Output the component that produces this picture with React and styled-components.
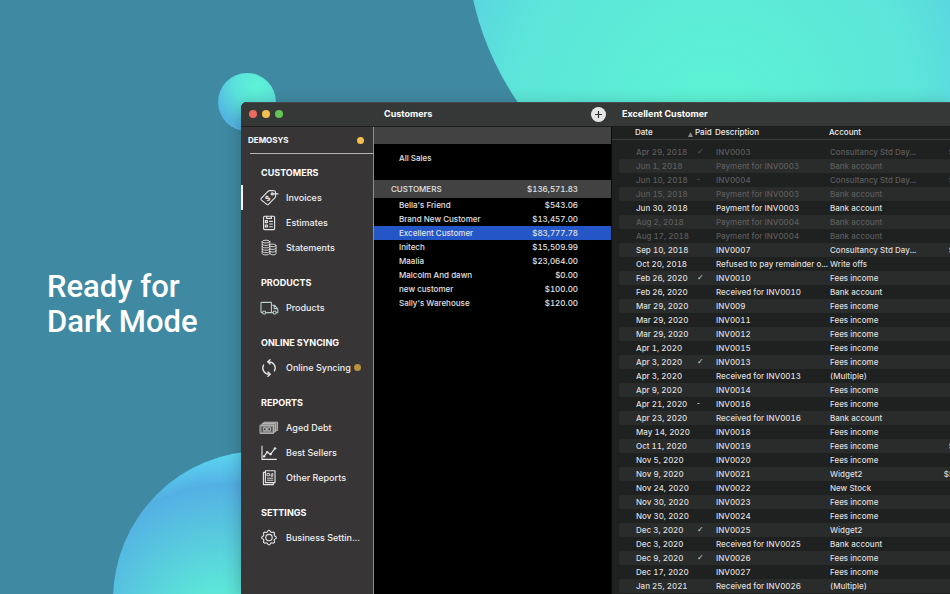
import React from "react";

import styled, { createGlobalStyle } from "styled-components";

const GlobalStyle = createGlobalStyle`
  * {
    box-sizing: border-box;
  }
  body {
    margin: 0;
    background: #3f8aa2;
    font-family: "Inter", "Liberation Sans", sans-serif;
  }
  button {
    font-family: inherit;
    border: 0;
    padding: 0;
  }
  table {
    border-collapse: separate;
    border-spacing: 0;
    table-layout: fixed;
    font-variant-numeric: tabular-nums;
  }
`;

const Page = styled.main`
  position: relative;
  display: flex;
  min-height: 100vh;
  overflow: hidden;
  background: #3f8aa2;
`;

/* decorative bubbles behind the window */
const Bubble = styled.div`
  position: absolute;
  border-radius: 50%;
`;
const TopBubble = styled(Bubble)`
  left: 466px;
  top: -361px;
  width: 592px;
  height: 592px;
  background: radial-gradient(
    circle at 42% 80%,
    #5df3d5 0,
    #5ce6d9 200px,
    #5ad7df 260px,
    #55c0e2 330px
  );
`;
const SmallBubble = styled(Bubble)`
  left: 218px;
  top: 73px;
  width: 58px;
  height: 58px;
  background: radial-gradient(
    circle at 66% 22%,
    #5df3d5 0,
    #5ae2da 22px,
    #54b4e4 45px,
    #5bd5f0 54px
  );
`;
const BottomBubble = styled(Bubble)`
  left: 113px;
  top: 451px;
  width: 298px;
  height: 298px;
  background: radial-gradient(
    circle at 38% 63%,
    #5df0d5 0,
    #5ce6d8 50px,
    #54b0e4 154px,
    #5cdcf4 190px
  );
`;

const Intro = styled.div`
  position: relative;
  flex: 0 0 241px;
  display: flex;
  align-items: center;
  padding: 14px 0 0 47px;
`;
const Headline = styled.h1`
  margin: 0;
  font-family: "Roboto", sans-serif;
  font-size: 31px;
  line-height: 35px;
  font-weight: 500;
  color: #fff;
  white-space: nowrap;
`;

const AppWindow = styled.section`
  position: relative;
  flex: 1;
  min-width: 0;
  display: flex;
  flex-direction: column;
  margin-top: 102px;
  border-radius: 6px 0 0 0;
  overflow: hidden;
  background: #000;
  box-shadow: 0 4px 18px rgba(0, 0, 0, 0.25);
`;
const TitleBar = styled.header`
  display: flex;
  height: 25px;
  padding-bottom: 1px;
  background: #363838;
  border-top: 1px solid #474a4a;
  border-bottom: 1px solid #1d1d1d;
`;
const Lights = styled.div`
  flex: 0 0 133px;
  display: flex;
  align-items: center;
  gap: 5px;
  padding-left: 8px;
`;
const Light = styled.button`
  width: 8px;
  height: 8px;
  border-radius: 50%;
  background: ${(props) => props.$color};
`;
const PaneTitle = styled.div`
  flex: ${(props) => props.$flex};
  display: flex;
  align-items: center;
  justify-content: space-between;
  padding: 0 6px 0 10px;
`;
const Title = styled.h2`
  margin: 0;
  font-size: 9px;
  line-height: 14px;
  font-weight: 700;
  color: #fff;
`;
const AddButton = styled.button`
  display: flex;
  width: 15px;
  height: 15px;
  border-radius: 50%;
  background: #e6e6e6;
`;

const Body = styled.div`
  flex: 1;
  display: flex;
`;
const Sidebar = styled.nav`
  flex: 0 0 133px;
  background: #373536;
  border-right: 1px solid #8f8f8f;
`;
const Company = styled.div`
  display: flex;
  align-items: center;
  justify-content: space-between;
  height: 26px;
  margin-left: 7px;
  padding-right: 9px;
  font-size: 8px;
  font-weight: 700;
  color: #fff;
`;
const Rule = styled.hr`
  margin: 0 0 6px 9px;
  border: 0;
  border-top: 1px solid #b4b4b4;
`;
const Dot = styled.span`
  width: 7px;
  height: 7px;
  border-radius: 50%;
  background: ${(props) => props.$color};
`;
const Group = styled.div`
  padding-bottom: 10px;
`;
const GroupTitle = styled.h3`
  margin: 0;
  padding: 0 0 0 20px;
  font-size: 9px;
  line-height: 25px;
  font-weight: 700;
  color: #fff;
`;
const NavLink = styled.a`
  display: flex;
  align-items: center;
  height: 25px;
  padding-left: 16px;
  border-left: 2px solid ${(props) => (props.$active ? "#fff" : "transparent")};
  font-size: 9px;
  font-weight: 500;
  color: #f0f0f0;
  text-decoration: none;
  white-space: nowrap;

  svg {
    flex: none;
    margin-right: 7px;
  }
  ${Dot} {
    margin-left: 3px;
  }
`;

const Customers = styled.div`
  flex: 0 0 237px;
  background: #000;
`;
const Band = styled.div`
  height: 17px;
  background: #424242;
`;
const CustomerTable = styled.table`
  width: 100%;
  font-size: 8px;
  line-height: 14px;
  font-weight: 500;
  color: #e2e2e2;

  td,
  th {
    height: 14px;
    padding: 0 0 0 25px;
    font-weight: 500;
    text-align: left;
  }
  td:last-child,
  th:last-child {
    width: 90px;
    padding: 0 33px 0 0;
    text-align: right;
  }
  thead th {
    height: 18px;
    background: #424242;
  }
  thead th:first-child {
    padding-left: 17px;
  }
`;
const AllRow = styled.tr`
  td {
    height: 36px;
    padding-bottom: 8px;
  }
`;
const CustomerRow = styled.tr`
  background: ${(props) => (props.$selected ? "#2456c8" : "transparent")};
`;

const Ledger = styled.div`
  flex: 1;
  min-width: 0;
  overflow: hidden;
  padding-left: 7px;
  background: #1f2020;
  border-left: 1px solid #0c0c0c;
`;
const LedgerTable = styled.table`
  width: 100%;
  min-width: 335px;
  font-size: 8px;
  line-height: 14px;
  font-weight: 500;

  th {
    height: 12px;
    padding: 0 0 2px;
    line-height: 10px;
    font-weight: 500;
    text-align: left;
    color: #ededed;
  }
  th:first-child {
    padding-left: 16px;
  }
  td {
    height: 14px;
    padding: 0 0 0 1px;
    white-space: nowrap;
  }
  td:first-child {
    padding-left: 17px;
    border-radius: 3px 0 0 3px;
  }
  td:last-child {
    text-align: right;
  }
`;
const HeadLine = styled.div`
  height: 6px;
  margin-left: -7px;
  border-top: 1px solid #3a3b3b;
`;
const SortHead = styled.span`
  display: flex;
  align-items: flex-end;
  justify-content: space-between;
  padding-right: 2px;
`;
const Entry = styled.tr`
  color: ${(props) => (props.$dim ? "#5c5d5d" : "#dedede")};

  &:nth-child(even) td {
    background: #2a2b2b;
  }
`;
const Mark = styled.span`
  display: block;
  height: 14px;
  padding-left: 1px;
  font-family: "DejaVu Sans", sans-serif;
`;

const Icon = ({ children, color = "#e8e8e8" }) => (
  <svg
    width="20"
    height="18"
    viewBox="0 0 20 18"
    fill="none"
    stroke={color}
    strokeWidth="1.1"
    strokeLinejoin="round"
    strokeLinecap="round"
    aria-hidden="true"
  >
    {children}
  </svg>
);

const TagIcon = () => (
  <Icon>
    <path d="M2.2 9.4 9.2 2.2Q9.8 1.6 10.6 1.6L15.2 1.7Q16.4 1.8 16.4 3L16.6 7Q16.6 8 16 8.6L9.4 15.4Q8.6 16.2 7.8 15.4L2.2 10.8Q1.5 10.1 2.2 9.4Z" />
    <circle cx="13.2" cy="4.9" r="1.1" />
    <path d="M13.4 4.9H19" />
    <text
      x="8.6"
      y="11.9"
      fontSize="7"
      fontWeight="700"
      textAnchor="middle"
      fill="#e8e8e8"
      stroke="none"
      transform="rotate(-35 8.6 9.4)"
    >
      $
    </text>
  </Icon>
);
const ChecklistIcon = () => (
  <Icon>
    <rect x="4.6" y="2.2" width="11" height="13.4" rx="1" />
    <path d="M7.6 2.2V4.4H12.4V2.2" />
    <rect x="6.4" y="6.6" width="2" height="2" />
    <rect x="6.4" y="11" width="2" height="2" />
    <path d="M10.6 7.4H13.4M10.6 10H13.4M10.6 12.8H13.4" />
  </Icon>
);
const CoinsIcon = () => (
  <Icon>
    <g strokeWidth="0.9">
      <ellipse cx="7" cy="2.6" rx="3.8" ry="1.4" />
      <path d="M3.2 2.6V14.6C3.2 16.4 10.8 16.4 10.8 14.6M10.8 2.6V14.6M3.2 5.2C3.2 7 10.8 7 10.8 5.2M3.2 7.6C3.2 9.4 10.8 9.4 10.8 7.6M3.2 10C3.2 11.8 10.8 11.8 10.8 10M3.2 12.4C3.2 14.2 10.8 14.2 10.8 12.4" />
      <path d="M10.8 5.6C12 4.7 17 4.9 17 6.4V14.6C17 16.4 10.8 16.2 10.8 14.6M10.8 7.2C11.6 8 17 8 17 6.6M10.8 9.8C11.6 10.8 17 10.8 17 9.2M10.8 12.4C11.6 13.4 17 13.4 17 11.8" />
    </g>
  </Icon>
);
const TruckIcon = () => (
  <Icon color="#b4d0c8">
    <path d="M3.4 13.6H2.8Q2 13.6 2 12.8V4.2Q2 3.4 2.8 3.4H12.4V13.6H7M12.4 6.2H15.4L18.8 9.8V13.6H17.6M12.4 13.6H13.6M15.2 6.4V9.6H18.6" />
    <circle cx="5.2" cy="13.6" r="1.6" />
    <circle cx="15.6" cy="13.6" r="1.6" />
  </Icon>
);
const SyncIcon = () => (
  <Icon>
    <g strokeWidth="1.3">
      <path d="M15.4 12A6.2 6.2 0 0 0 10 2.8H9M4.6 6A6.2 6.2 0 0 0 10 15.2H11" />
      <path d="M11 0.8 8.8 2.8 11 5M9 13 11.2 15.2 9 17.2" />
    </g>
  </Icon>
);
const CashIcon = () => (
  <Icon color="#c2c2c2">
    <g strokeWidth="0.9">
      <path d="M3 6.2V4.6H16.4V13H14.6M4.8 4.6V3.2H18.6V11.4H16.4" fill="#7c7c7c" />
      <rect x="1.4" y="6.2" width="13.2" height="8.2" fill="#8a8a8a" />
      <circle cx="5.8" cy="10.3" r="1.5" fill="#373536" />
      <circle cx="10.4" cy="10.3" r="1.5" fill="#373536" />
      <path d="M3.2 8.2V12.4M12.8 8.2V12.4" stroke="#373536" />
    </g>
  </Icon>
);
const ChartIcon = () => (
  <Icon>
    <path d="M3 2V15.4H17.4M5 12.4 8.2 8.2 11.6 10.2 16 4.4" />
    <g fill="#e8e8e8" strokeWidth="0.6">
      <circle cx="5" cy="12.4" r="0.9" />
      <circle cx="8.2" cy="8.2" r="0.9" />
      <circle cx="11.6" cy="10.2" r="0.9" />
      <circle cx="16" cy="4.4" r="0.9" />
    </g>
  </Icon>
);
const ReportIcon = () => (
  <Icon>
    <path d="M6.4 1.8H16V13.6H6.4ZM6.4 3.4H4.4V15.6H14.4V13.6" />
    <g strokeWidth="0.9">
      <rect x="8.4" y="4.4" width="2" height="2.4" />
      <path d="M12 6.8V5.4L13.8 4.4V6.8ZM8.4 9.2H13.8M8.4 11.2H13.8" />
    </g>
  </Icon>
);

// eight-lobed outline around the hub
const gearPath = Array.from({ length: 64 }, (_, i) => {
  const angle = (i / 64) * Math.PI * 2;
  const radius = 6.5 + 0.7 * Math.tanh(2.5 * Math.cos(8 * angle));
  const x = (10 + radius * Math.cos(angle)).toFixed(2);
  const y = (8.6 + radius * Math.sin(angle)).toFixed(2);
  return `${i ? "L" : "M"}${x} ${y}`;
}).join("");
const GearIcon = () => (
  <Icon>
    <path d={`${gearPath}Z`} />
    <circle cx="10" cy="8.6" r="3.2" />
  </Icon>
);

const menu = [
  {
    title: "CUSTOMERS",
    items: [
      { label: "Invoices", icon: TagIcon, active: true },
      { label: "Estimates", icon: ChecklistIcon },
      { label: "Statements", icon: CoinsIcon },
    ],
  },
  { title: "PRODUCTS", items: [{ label: "Products", icon: TruckIcon }] },
  {
    title: "ONLINE SYNCING",
    items: [{ label: "Online Syncing", icon: SyncIcon, dot: true }],
  },
  {
    title: "REPORTS",
    items: [
      { label: "Aged Debt", icon: CashIcon },
      { label: "Best Sellers", icon: ChartIcon },
      { label: "Other Reports", icon: ReportIcon },
    ],
  },
  { title: "SETTINGS", items: [{ label: "Business Settin...", icon: GearIcon }] },
];

const customers = [
  ["Bella's Friend", "$543.06"],
  ["Brand New Customer", "$13,457.00"],
  ["Excellent Customer", "$83,777.78"],
  ["Initech", "$15,509.99"],
  ["Maalia", "$23,064.00"],
  ["Malcolm And dawn", "$0.00"],
  ["new customer", "$100.00"],
  ["Sally's Warehouse", "$120.00"],
];

// date, paid, description, account, amount, dimmed
const entries = [
  ["Apr 29, 2018", "✓", "INV0003", "Consultancy Std Day...", "$", true],
  ["Jun 1, 2018", "", "Payment for INV0003", "Bank account", "", true],
  ["Jun 10, 2018", "-", "INV0004", "Consultancy Std Day...", "$", true],
  ["Jun 15, 2018", "", "Payment for INV0003", "Bank account", "", true],
  ["Jun 30, 2018", "", "Payment for INV0003", "Bank account", ""],
  ["Aug 2, 2018", "", "Payment for INV0004", "Bank account", "", true],
  ["Aug 17, 2018", "", "Payment for INV0004", "Bank account", "", true],
  ["Sep 10, 2018", "", "INV0007", "Consultancy Std Day...", "$"],
  ["Oct 20, 2018", "", "Refused to pay remainder o...", "Write offs", ""],
  ["Feb 26, 2020", "✓", "INV0010", "Fees income", ""],
  ["Feb 26, 2020", "", "Received for INV0010", "Bank account", ""],
  ["Mar 29, 2020", "", "INV009", "Fees income", ""],
  ["Mar 29, 2020", "", "INV0011", "Fees income", ""],
  ["Mar 29, 2020", "", "INV0012", "Fees income", ""],
  ["Apr 1, 2020", "", "INV0015", "Fees income", ""],
  ["Apr 3, 2020", "✓", "INV0013", "Fees income", ""],
  ["Apr 3, 2020", "", "Received for INV0013", "(Multiple)", ""],
  ["Apr 9, 2020", "", "INV0014", "Fees income", ""],
  ["Apr 21, 2020", "-", "INV0016", "Fees income", ""],
  ["Apr 23, 2020", "", "Received for INV0016", "Bank account", ""],
  ["May 14, 2020", "", "INV0018", "Fees income", ""],
  ["Oct 11, 2020", "", "INV0019", "Fees income", "$"],
  ["Nov 5, 2020", "", "INV0020", "Fees income", ""],
  ["Nov 9, 2020", "", "INV0021", "Widget2", "$5"],
  ["Nov 24, 2020", "", "INV0022", "New Stock", ""],
  ["Nov 30, 2020", "", "INV0023", "Fees income", ""],
  ["Nov 30, 2020", "", "INV0024", "Fees income", ""],
  ["Dec 3, 2020", "✓", "INV0025", "Widget2", ""],
  ["Dec 3, 2020", "", "Received for INV0025", "Bank account", ""],
  ["Dec 9, 2020", "✓", "INV0026", "Fees income", ""],
  ["Dec 17, 2020", "", "INV0027", "Fees income", ""],
  ["Jan 25, 2021", "", "Received for INV0026", "(Multiple)", ""],
];

const Column = styled.col`
  width: ${(props) => props.$width};
`;
const LedgerColumns = () => (
  <colgroup>
    <Column $width="76px" />
    <Column $width="20px" />
    <Column $width="114px" />
    <Column $width="auto" />
    <Column $width="32px" />
  </colgroup>
);

const App = () => {
  return (
    <Page>
      <GlobalStyle />
      <TopBubble />
      <SmallBubble />
      <BottomBubble />
      <Intro>
        <Headline>
          Ready for
          <br />
          Dark Mode
        </Headline>
      </Intro>
      <AppWindow>
        <TitleBar>
          <Lights>
            <Light $color="#ec6a5f" aria-label="Close" />
            <Light $color="#f4be50" aria-label="Minimize" />
            <Light $color="#62c555" aria-label="Zoom" />
          </Lights>
          <PaneTitle $flex="0 0 238px">
            <Title>Customers</Title>
            <AddButton aria-label="Add customer">
              <svg width="15" height="15" viewBox="0 0 15 15" stroke="#333" strokeWidth="1.2">
                <path d="M7.5 4V11M4 7.5H11" />
              </svg>
            </AddButton>
          </PaneTitle>
          <PaneTitle $flex="1">
            <Title>Excellent Customer</Title>
          </PaneTitle>
        </TitleBar>
        <Body>
          <Sidebar>
            <Company>
              DEMOSYS
              <Dot $color="#f4be50" />
            </Company>
            <Rule />
            {menu.map((group) => (
              <Group key={group.title}>
                <GroupTitle>{group.title}</GroupTitle>
                {group.items.map(({ label, icon: ItemIcon, active, dot }) => (
                  <NavLink key={label} href="#" $active={active}>
                    <ItemIcon />
                    {label}
                    {dot && <Dot $color="#b8923f" />}
                  </NavLink>
                ))}
              </Group>
            ))}
          </Sidebar>
          <Customers>
            <Band />
            <CustomerTable>
              <tbody>
                <AllRow>
                  <td>All Sales</td>
                  <td />
                </AllRow>
              </tbody>
            </CustomerTable>
            <CustomerTable>
              <thead>
                <tr>
                  <th>CUSTOMERS</th>
                  <th>$136,571.83</th>
                </tr>
              </thead>
              <tbody>
                {customers.map(([name, total]) => (
                  <CustomerRow key={name} $selected={name === "Excellent Customer"}>
                    <td>{name}</td>
                    <td>{total}</td>
                  </CustomerRow>
                ))}
              </tbody>
            </CustomerTable>
          </Customers>
          <Ledger>
            <LedgerTable>
              <LedgerColumns />
              <thead>
                <tr>
                  <th>
                    <SortHead>
                      Date
                      <svg width="5" height="5" viewBox="0 0 5 5" fill="#8a8a8a">
                        <path d="M2.5 0 5 5H0Z" />
                      </svg>
                    </SortHead>
                  </th>
                  <th>Paid</th>
                  <th>Description</th>
                  <th>Account</th>
                  <th />
                </tr>
              </thead>
            </LedgerTable>
            <HeadLine />
            <LedgerTable>
              <LedgerColumns />
              <tbody>
                {entries.map(([date, paid, description, account, amount, dim], index) => (
                  <Entry key={index} $dim={dim}>
                    <td>{date}</td>
                    <td>{paid && <Mark>{paid}</Mark>}</td>
                    <td>{description}</td>
                    <td>{account}</td>
                    <td>{amount}</td>
                  </Entry>
                ))}
              </tbody>
            </LedgerTable>
          </Ledger>
        </Body>
      </AppWindow>
    </Page>
  );
};

export default App;
